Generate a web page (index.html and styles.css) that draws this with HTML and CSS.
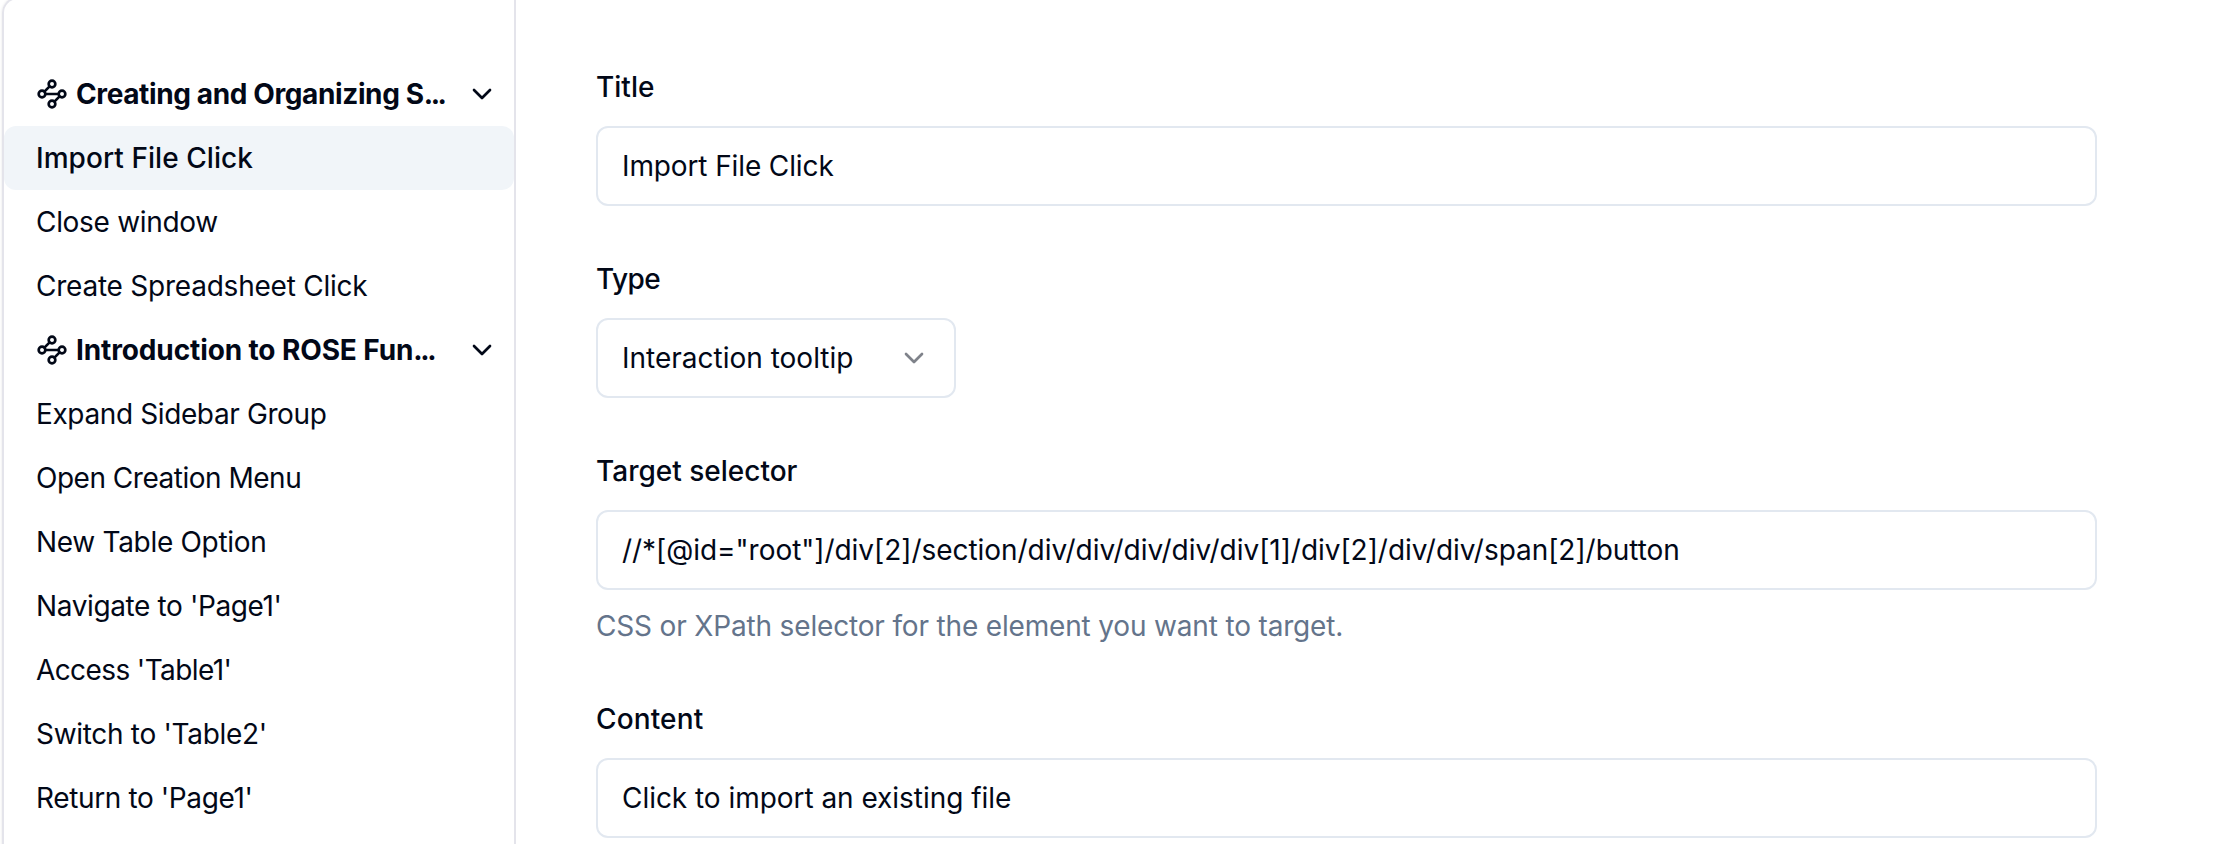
FILE: index.html
```html
<!DOCTYPE html>
<html lang="en">
<head>
<meta charset="utf-8">
<title>Step editor</title>
<link rel="stylesheet" href="styles.css">
</head>
<body>
<svg class="sprite" aria-hidden="true">
  <symbol id="waypoints" viewBox="0 0 24 24">
    <circle cx="12" cy="4.5" r="2.5"/><path d="m10.2 6.3-3.9 3.9"/><circle cx="4.5" cy="12" r="2.5"/><path d="M7 12h10"/><circle cx="19.5" cy="12" r="2.5"/><path d="m13.8 17.7 3.9-3.9"/><circle cx="12" cy="19.5" r="2.5"/>
  </symbol>
  <symbol id="chevron" viewBox="0 0 24 24"><path d="m6 9 6 6 6-6"/></symbol>
</svg>
<div class="app">
  <nav class="sidebar">
    <div class="row group">
      <svg class="icon"><use href="#waypoints"/></svg>
      <span class="group-name tight-3">Creating and Organizing S<span class="dots">...</span></span>
      <svg class="icon"><use href="#chevron"/></svg>
    </div>
    <a class="row active">Import File Click</a>
    <a class="row">Close window</a>
    <a class="row tight-2">Create Spreadsheet Click</a>
    <div class="row group">
      <svg class="icon"><use href="#waypoints"/></svg>
      <span class="group-name tight-1">Introduction to ROSE Fun<span class="dots">...</span></span>
      <svg class="icon"><use href="#chevron"/></svg>
    </div>
    <a class="row tight-3">Expand Sidebar Group</a>
    <a class="row tight-4">Open Creation Menu</a>
    <a class="row">New Table Option</a>
    <a class="row tight-3">Navigate to 'Page1'</a>
    <a class="row tight-5">Access 'Table1'</a>
    <a class="row">Switch to 'Table2'</a>
    <a class="row tight-3">Return to 'Page1'</a>
  </nav>
  <main class="editor">
    <section class="field">
      <div class="label">Title</div>
      <div class="input tight-1">Import File Click</div>
    </section>
    <section class="field">
      <div class="label tight-5">Type</div>
      <div class="input select">Interaction tooltip<svg class="icon muted"><use href="#chevron"/></svg></div>
    </section>
    <section class="field">
      <div class="label">Target selector</div>
      <div class="input selector">//*[@id="root"]/div[2]/section/div/div/div/div/div[1]/div[2]/div/div/span[2]/button</div>
      <p class="help">CSS or XPath selector for the element you want to target.</p>
    </section>
    <section class="field">
      <div class="label content-label">Content</div>
      <div class="input selector">Click to import an existing file</div>
    </section>
  </main>
</div>
</body>
</html>
```
FILE: styles.css
```css
* { box-sizing: border-box; }
body {
  margin: 0;
  height: 844px;
  overflow: hidden;
  background: #fff;
  color: #020817;
  font: 400 28px/28px Inter, "Liberation Sans", sans-serif;
}
.sprite { display: none; }
.app {
  display: flex;
  height: 880px;
  margin: -3px 0 0 2px;
  border: 2px solid #e4e4eb;
  border-right: 0;
  border-radius: 16px 0 0 16px;
  box-shadow: 0 0 3px rgba(0, 0, 0, .1);
}
.sidebar {
  width: 512px;
  flex: none;
  padding-top: 63px;
  border-right: 2px solid #e4e4eb;
}
.row {
  display: flex;
  align-items: center;
  height: 64px;
  padding: 0 16px 0 32px;
  white-space: nowrap;
  letter-spacing: -.31px;
}
.active {
  background: #f1f5f9;
  border-radius: 12px;
  font-weight: 500;
  letter-spacing: .06px;
}
.group { gap: 8px; font-weight: 700; }
.group-name { flex: 1; }
.dots { letter-spacing: -2.4px; }
.icon {
  width: 32px;
  height: 32px;
  flex: none;
  fill: none;
  stroke: currentColor;
  stroke-width: 2;
  stroke-linecap: round;
  stroke-linejoin: round;
}
.muted { opacity: .5; }
.editor {
  display: flex;
  flex-direction: column;
  gap: 59px;
  padding: 74px 0 0 80px;
}
.field { width: 1501px; }
.label { font-weight: 500; margin-bottom: 25px; }
.input {
  display: flex;
  align-items: center;
  height: 80px;
  padding: 0 24px;
  border: 2px solid #e2e8f0;
  border-radius: 12px;
  white-space: nowrap;
}
.select { width: 360px; justify-content: space-between; }
.selector { letter-spacing: -.04px; }
.help {
  margin: 16px 0 0;
  color: #64748b;
  line-height: 40px;
  letter-spacing: -.165px;
}
.content-label { letter-spacing: .14px; }
.tight-1 { letter-spacing: -.12px; }
.tight-2 { letter-spacing: -.23px; }
.tight-3 { letter-spacing: -.38px; }
.tight-4 { letter-spacing: -.49px; }
.tight-5 { letter-spacing: -.6px; }
```
